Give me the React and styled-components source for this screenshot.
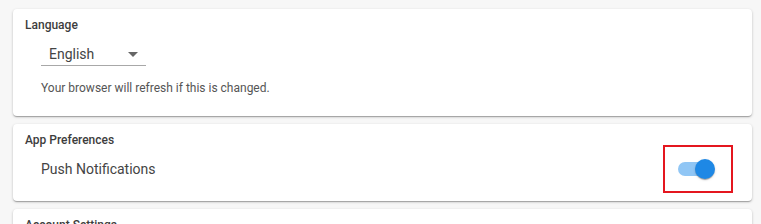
import React from 'react';
import styled, { createGlobalStyle } from 'styled-components';

const GlobalStyle = createGlobalStyle`
  html, body {
    margin: 0;
    padding: 0;
    background: #f7f7f7;
    font-family: Roboto, "Liberation Sans", Arial, sans-serif;
    overflow: hidden;
  }
`;

const Page = styled.div`
  display: flex;
  flex-direction: column;
  gap: 8px;
  padding: 9px 9px 0 13px;
`;

const Card = styled.section`
  background: #fff;
  border-radius: 4px;
  box-shadow: 0 1px 3px rgba(0, 0, 0, 0.2), 0 1px 1px rgba(0, 0, 0, 0.14),
    0 2px 1px -1px rgba(0, 0, 0, 0.12);
  padding: 8px 12px ${(p) => p.$pb || 13}px;
`;

const Title = styled.h3`
  margin: 0;
  font-size: 12px;
  line-height: 16px;
  font-weight: 500;
  color: #3d3d3d;
`;

const Body = styled.div`
  padding-left: 16px;
`;

const Select = styled.div`
  margin-top: 11px;
  width: 105px;
  height: 22px;
  box-sizing: border-box;
  border-bottom: 1px solid #a8a8a8;
  display: flex;
  align-items: center;
  justify-content: space-between;
  padding: 0 8px 1px 8px;
  font-size: 14px;
  color: #444;
`;

const Arrow = styled.span`
  width: 0;
  height: 0;
  border-left: 5px solid transparent;
  border-right: 5px solid transparent;
  border-top: 5px solid #666;
`;

const Helper = styled.p`
  margin: 14px 0 0;
  font-size: 12px;
  line-height: 16px;
  color: #555;
`;

const Row = styled.div`
  margin-top: 2px;
  display: flex;
  align-items: center;
  justify-content: space-between;
  padding: 0 16px;
  height: 38px;
`;

const Label = styled.span`
  font-size: 14px;
  color: #444;
`;

const SwitchRoot = styled.span`
  position: relative;
  width: 58px;
  height: 38px;
  flex: none;

  &::after {
    content: '';
    position: absolute;
    top: -5px;
    bottom: -5px;
    left: -3px;
    right: -9px;
    border: 2px solid #e4161f;
  }
`;

const Track = styled.span`
  position: absolute;
  left: 12px;
  top: 12px;
  width: 34px;
  height: 14px;
  border-radius: 7px;
  background: ${(p) => (p.$on ? '#90c6f5' : '#bdbdbd')};
`;

const Thumb = styled.span`
  position: absolute;
  top: 9px;
  left: ${(p) => (p.$on ? 29 : 9)}px;
  width: 20px;
  height: 20px;
  border-radius: 50%;
  background: ${(p) => (p.$on ? '#1e88e5' : '#fafafa')};
  box-shadow: 0 2px 1px -1px rgba(0, 0, 0, 0.2), 0 1px 1px rgba(0, 0, 0, 0.14),
    0 1px 3px rgba(0, 0, 0, 0.12);
`;

function Switch({ on }) {
  return (
    <SwitchRoot>
      <Track $on={on} />
      <Thumb $on={on} />
    </SwitchRoot>
  );
}

export default function App() {
  return (
    <>
      <GlobalStyle />
      <Page>
        <Card $pb={20}>
          <Title>Language</Title>
          <Body>
            <Select>
              English
              <Arrow />
            </Select>
            <Helper>Your browser will refresh if this is changed.</Helper>
          </Body>
        </Card>
        <Card $pb={13}>
          <Title>App Preferences</Title>
          <Row>
            <Label>Push Notifications</Label>
            <Switch on />
          </Row>
        </Card>
        <Card $pb={13}>
          <Title>Account Settings</Title>
          <Row>
            <Label>Change Password</Label>
          </Row>
        </Card>
      </Page>
    </>
  );
}
